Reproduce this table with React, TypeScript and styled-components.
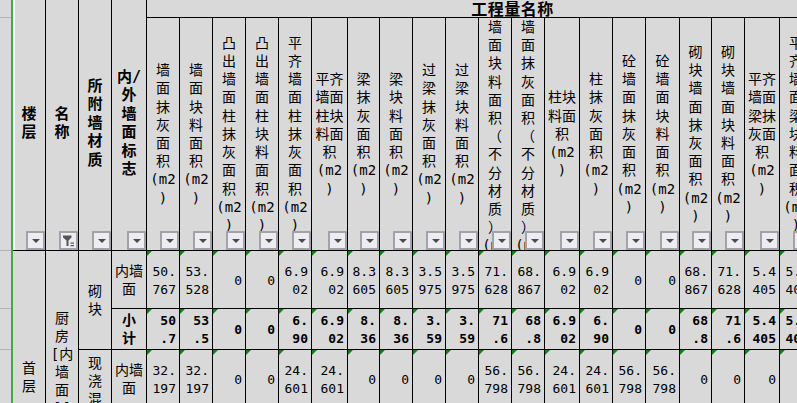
import React from "react";
import styled, { createGlobalStyle } from "styled-components";

const Global = createGlobalStyle`
  html, body { margin: 0; padding: 0; background: #d9d9d9; overflow: hidden; }
  body { width: 797px; height: 403px; }
  #root { width: 797px; height: 403px; overflow: hidden; }
`;

type Qty = { w: number; head: string[]; r1: string; r2: string; r3: string };

const LEFT_W = [33, 33, 33, 35];

const QTY: Qty[] = [
  { w: 33, head: ["墙", "面", "抹", "灰", "面", "积", "(m2", ")"], r1: "50.|767", r2: "50|.7", r3: "32.|197" },
  { w: 33, head: ["墙", "面", "块", "料", "面", "积", "(m2", ")"], r1: "53.|528", r2: "53|.5", r3: "32.|197" },
  { w: 33, head: ["凸", "出", "墙", "面", "柱", "抹", "灰", "面", "积", "(m2", ")"], r1: "0", r2: "0", r3: "0" },
  { w: 33, head: ["凸", "出", "墙", "面", "柱", "块", "料", "面", "积", "(m2", ")"], r1: "0", r2: "0", r3: "0" },
  { w: 33, head: ["平", "齐", "墙", "面", "柱", "抹", "灰", "面", "积", "(m2", ")"], r1: "6.9|02", r2: "6.|90", r3: "24.|601" },
  { w: 36, head: ["平齐", "墙面", "柱块", "料面", "积", "(m2", ")"], r1: "6.9|02", r2: "6.9|02", r3: "24.|601" },
  { w: 32, head: ["梁", "抹", "灰", "面", "积", "(m2", ")"], r1: "8.3|605", r2: "8.|36", r3: "0" },
  { w: 33, head: ["梁", "块", "料", "面", "积", "(m2", ")"], r1: "8.3|605", r2: "8.|36", r3: "0" },
  { w: 33, head: ["过", "梁", "抹", "灰", "面", "积", "(m2", ")"], r1: "3.5|975", r2: "3.|59", r3: "0" },
  { w: 33, head: ["过", "梁", "块", "料", "面", "积", "(m2", ")"], r1: "3.5|975", r2: "3.|59", r3: "0" },
  { w: 33, head: ["墙", "面", "块", "料", "面", "积", "（", "不", "分", "材", "质", "）", "(m2"], r1: "71.|628", r2: "71|.6", r3: "56.|798" },
  { w: 33, head: ["墙", "面", "抹", "灰", "面", "积", "（", "不", "分", "材", "质", "）", "(m2"], r1: "68.|867", r2: "68|.8", r3: "56.|798" },
  { w: 35, head: ["柱块", "料面", "积", "(m2", ")"], r1: "6.9|02", r2: "6.9|02", r3: "24.|601" },
  { w: 33, head: ["柱", "抹", "灰", "面", "积", "(m2", ")"], r1: "6.9|02", r2: "6.|90", r3: "24.|601" },
  { w: 33, head: ["砼", "墙", "面", "抹", "灰", "面", "积", "(m2", ")"], r1: "0", r2: "0", r3: "56.|798" },
  { w: 34, head: ["砼", "墙", "面", "块", "料", "面", "积", "(m2", ")"], r1: "0", r2: "0", r3: "56.|798" },
  { w: 32, head: ["砌", "块", "墙", "面", "抹", "灰", "面", "积", "(m2", ")"], r1: "68.|867", r2: "68|.8", r3: "0" },
  { w: 33, head: ["砌", "块", "墙", "面", "块", "料", "面", "积", "(m2", ")"], r1: "71.|628", r2: "71|.6", r3: "0" },
  { w: 35, head: ["平齐", "墙面", "梁抹", "灰面", "积", "(m2", ")"], r1: "5.4|405", r2: "5.4|405", r3: "0" },
  { w: 33, head: ["平", "齐", "墙", "面", "梁", "块", "料", "面", "积", "(m2", ")"], r1: "5.4|405", r2: "5.4|405", r3: "0" },
  { w: 33, head: ["柱", "块", "料", "面", "积", "(m2", ")"], r1: "0", r2: "0", r3: "0" },
  { w: 33, head: ["柱", "抹", "灰", "面", "积", "(m2", ")"], r1: "0", r2: "0", r3: "0" },
];

const ROWS = [18, 233, 58, 41, 58, 41];
const FIRST_QTY_COL = 3 + LEFT_W.length;

const Sheet = styled.div`
  display: grid;
  grid-template-columns: 11px 2px ${[...LEFT_W, ...QTY.map((q) => q.w)].map((w) => `${w}px`).join(" ")};
  grid-template-rows: ${ROWS.map((h) => `${h}px`).join(" ")};
  width: max-content;
  background: #d9d9d9;
  color: #000;
  font-family: "DejaVu Sans Mono", "Noto Sans CJK SC", monospace;
`;

type Place = { $c: number; $r: number; $cs?: number; $rs?: number };

const GutterCell = styled.div<{ $r: number }>`
  grid-column: 1;
  grid-row: ${(p) => p.$r};
  border-bottom: 1px solid #b4b4b4;
  background: #d9d9d9;
`;

const GreenBar = styled.div`
  grid-column: 2;
  grid-row: 1 / -1;
  background: #45a847;
`;

const Cell = styled.div<Place>`
  grid-column: ${(p) => `${p.$c} / span ${p.$cs ?? 1}`};
  grid-row: ${(p) => `${p.$r} / span ${p.$rs ?? 1}`};
  position: relative;
  box-sizing: border-box;
  border-right: 1px solid #000;
  border-bottom: 1px solid #000;
  overflow: hidden;
  display: flex;
  flex-direction: column;
`;

const Line = styled.span`
  display: block;
  white-space: nowrap;
  flex: none;
`;

const GroupHead = styled(Cell)`
  align-items: center;
  justify-content: center;
  font-family: "Noto Sans CJK SC", sans-serif;
  font-weight: 700;
  font-size: 16px;
  line-height: 17px;
  letter-spacing: 0.5px;
`;

const LeftHead = styled(Cell)<{ $edge?: boolean }>`
  align-items: center;
  justify-content: center;
  font-weight: 700;
  font-size: 15px;
  line-height: 18.5px;
  text-align: center;
  padding-bottom: 4px;
  box-shadow: ${(p) => (p.$edge ? "inset 2px 0 #fff" : "none")};
`;

const QtyHead = styled(Cell)`
  align-items: center;
  justify-content: safe center;
  font-size: 14px;
  line-height: 18.2px;
  text-align: center;
`;

const Drop = styled.div<{ $filter?: boolean }>`
  position: absolute;
  right: 0;
  bottom: 0;
  width: 19px;
  height: 19px;
  box-sizing: border-box;
  border: 2px solid #a2a2a9;
  background: #ededf1;
  display: flex;
  align-items: center;
  justify-content: center;
  &::after {
    content: "";
    display: ${(p) => (p.$filter ? "none" : "block")};
    width: 0;
    height: 0;
    margin-top: 1px;
    border-left: 4px solid transparent;
    border-right: 4px solid transparent;
    border-top: 4px solid #4a4a4a;
  }
`;

const TextCell = styled(Cell)<{ $bold?: boolean; $top?: number }>`
  align-items: center;
  justify-content: ${(p) => (p.$top !== undefined ? "flex-start" : "center")};
  padding-top: ${(p) => p.$top ?? 0}px;
  font-size: 14px;
  font-weight: ${(p) => (p.$bold ? 700 : 400)};
  line-height: 18px;
  text-align: center;
`;

const NumCell = styled(Cell)<{ $bold?: boolean }>`
  align-items: flex-end;
  justify-content: center;
  padding: 2px 3px 0 0;
  font-size: 13px;
  font-weight: ${(p) => (p.$bold ? 700 : 400)};
  line-height: 18px;
  text-align: right;
  &::before {
    content: "";
    position: absolute;
    top: 0;
    left: 0;
    border-top: 5px solid #0a850a;
    border-right: 5px solid transparent;
  }
`;

const FilterIcon = () => (
  <svg width="13" height="13" viewBox="0 0 13 13">
    <path d="M1 1.5h8.5v2L6.5 6.5v5.5h-2V6.5L1 3.5z" fill="#555" />
    <rect x="8.5" y="8.5" width="3.5" height="1.2" fill="#555" />
    <rect x="8.5" y="11" width="3.5" height="1.2" fill="#555" />
  </svg>
);

const lines = (items: string[]) => items.map((t, i) => <Line key={i}>{t}</Line>);
const split = (s: string) => lines(s.split("|"));

const leftHeads = [
  { text: ["楼", "层"], filter: false },
  { text: ["名", "称"], filter: true },
  { text: ["所", "附", "墙", "材", "质"], filter: false },
  { text: ["内/", "外", "墙", "面", "标", "志"], filter: false },
];

export default function App() {
  const dataRows: Array<{ key: "r1" | "r2" | "r3"; r: number; bold: boolean }> = [
    { key: "r1", r: 3, bold: false },
    { key: "r2", r: 4, bold: true },
    { key: "r3", r: 5, bold: false },
  ];
  return (
    <>
      <Global />
      <Sheet>
        {ROWS.map((_, i) => (
          <GutterCell key={`g${i}`} $r={i + 1} />
        ))}
        <GreenBar />

        {leftHeads.map((h, i) => (
          <LeftHead key={`lh${i}`} $c={3 + i} $r={1} $rs={2} $edge={i === 0}>
            {lines(h.text)}
            <Drop $filter={h.filter}>{h.filter && <FilterIcon />}</Drop>
          </LeftHead>
        ))}

        <GroupHead $c={FIRST_QTY_COL} $r={1} $cs={QTY.length}>
          工程量名称
        </GroupHead>

        {QTY.map((q, i) => (
          <QtyHead key={`qh${i}`} $c={FIRST_QTY_COL + i} $r={2}>
            {lines(q.head)}
            <Drop />
          </QtyHead>
        ))}

        <TextCell $c={3} $r={3} $rs={4} $top={108}>
          {split("首|层")}
        </TextCell>
        <TextCell $c={4} $r={3} $rs={4} $top={58}>
          {split("厨|房|[内|墙|面|][|外|墙|面|]")}
        </TextCell>
        <TextCell $c={5} $r={3} $rs={2}>
          {split("砌|块")}
        </TextCell>
        <TextCell $c={5} $r={5} $rs={2}>
          {split("现|浇|混|凝|土")}
        </TextCell>
        <TextCell $c={6} $r={3}>{split("内墙|面")}</TextCell>
        <TextCell $c={6} $r={4} $bold>{split("小|计")}</TextCell>
        <TextCell $c={6} $r={5}>{split("内墙|面")}</TextCell>
        <TextCell $c={6} $r={6} $bold>{split("小|计")}</TextCell>

        {dataRows.map((row) =>
          QTY.map((q, i) => (
            <NumCell key={`${row.key}-${i}`} $c={FIRST_QTY_COL + i} $r={row.r} $bold={row.bold}>
              {split(q[row.key])}
            </NumCell>
          ))
        )}
      </Sheet>
    </>
  );
}
